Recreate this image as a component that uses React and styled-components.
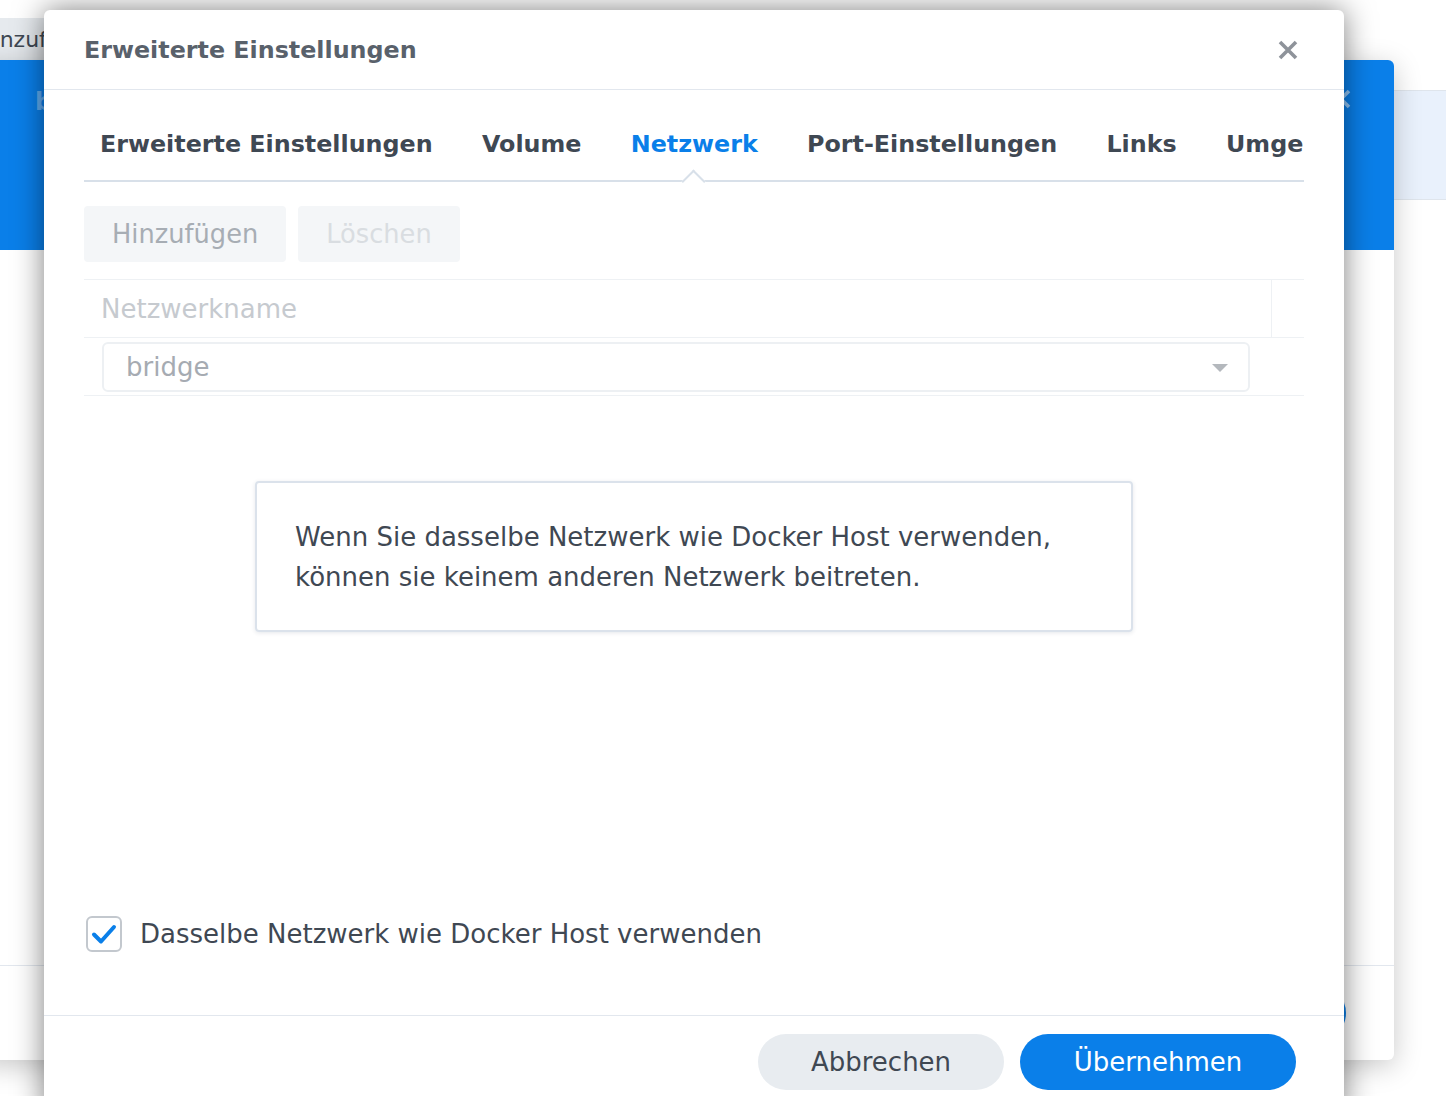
import React, { useState } from 'react';
import styled, { createGlobalStyle } from 'styled-components';

const color = {
  blue: '#0a7fe9',
  text: '#3f4853',
  title: '#59616b',
  line: '#e2e7ee',
  tabLine: '#d8e0e9',
  faint: '#c6cacf',
};

const GlobalStyle = createGlobalStyle`
  html, body {
    margin: 0;
    padding: 0;
    background: #fff;
    overflow: hidden;
  }
  body {
    font-family: "DejaVu Sans", Verdana, sans-serif;
    color: ${color.text};
  }
`;

const TABS = ['Erweiterte Einstellungen', 'Volume', 'Netzwerk', 'Port-Einstellungen', 'Links', 'Umgebung'];

function CloseIcon({ size = 22, stroke = '#8e939a' }) {
  return (
    <svg width={size} height={size} viewBox="0 0 22 22">
      <path d="M3 3 L19 19 M19 3 L3 19" stroke={stroke} strokeWidth="3.6" strokeLinecap="butt" />
    </svg>
  );
}

function App() {
  const [active, setActive] = useState('Netzwerk');
  const [sameHost, setSameHost] = useState(true);

  return (
    <>
      <GlobalStyle />
      <Styled.Desktop>
        {/* page behind everything */}
        <Styled.BackPage>
          <Styled.BackToolbar>
            <Styled.BackButton>Hinzufügen</Styled.BackButton>
          </Styled.BackToolbar>
          <Styled.BackRow />
        </Styled.BackPage>

        {/* parent window */}
        <Styled.ParentWindow>
          <Styled.ParentHeader>
            <span>bridge</span>
            <CloseIcon stroke="rgba(255,255,255,0.55)" />
          </Styled.ParentHeader>
          <Styled.ParentBody />
          <Styled.ParentFooter>
            <Styled.PillButton primary>Weiter</Styled.PillButton>
          </Styled.ParentFooter>
        </Styled.ParentWindow>

        {/* dialog */}
        <Styled.Dialog>
          <Styled.Header>
            <Styled.Title>Erweiterte Einstellungen</Styled.Title>
            <CloseIcon />
          </Styled.Header>

          <Styled.Body>
            <Styled.TabBar>
              {TABS.map((t) => (
                <Styled.Tab key={t} active={t === active} onClick={() => setActive(t)}>
                  {t}
                </Styled.Tab>
              ))}
            </Styled.TabBar>

            <Styled.Toolbar>
              <Styled.ToolButton>Hinzufügen</Styled.ToolButton>
              <Styled.ToolButton disabled>Löschen</Styled.ToolButton>
            </Styled.Toolbar>

            <Styled.Table>
              <Styled.TableRow head>
                <Styled.Cell>Netzwerkname</Styled.Cell>
                <Styled.EdgeCell divider />
              </Styled.TableRow>
              <Styled.TableRow>
                <Styled.Cell>
                  <Styled.Select>
                    <span>bridge</span>
                    <Styled.Caret />
                  </Styled.Select>
                </Styled.Cell>
                <Styled.EdgeCell />
              </Styled.TableRow>
            </Styled.Table>

            <Styled.Notice>
              Wenn Sie dasselbe Netzwerk wie Docker Host verwenden,
              <br />
              können sie keinem anderen Netzwerk beitreten.
            </Styled.Notice>

            <Styled.CheckRow onClick={() => setSameHost(!sameHost)}>
              <Styled.CheckBox>
                {sameHost && (
                  <svg width="28" height="28" viewBox="0 0 28 28">
                    <path d="M4 14.5 L11 21.5 L24 7" fill="none" stroke={color.blue} strokeWidth="4" strokeLinecap="round" strokeLinejoin="round" />
                  </svg>
                )}
              </Styled.CheckBox>
              <span>Dasselbe Netzwerk wie Docker Host verwenden</span>
            </Styled.CheckRow>
          </Styled.Body>

          <Styled.Footer>
            <Styled.PillButton>Abbrechen</Styled.PillButton>
            <Styled.PillButton primary wide>Übernehmen</Styled.PillButton>
          </Styled.Footer>
        </Styled.Dialog>
      </Styled.Desktop>
    </>
  );
}

const Styled = {
  Desktop: styled.div`
    position: relative;
    width: 1446px;
    height: 1096px;
    overflow: hidden;
    background: #fff;
  `,
  BackPage: styled.div`
    position: absolute;
    inset: 0;
    padding-top: 18px;
  `,
  BackToolbar: styled.div`
    display: flex;
    height: 42px;
  `,
  BackButton: styled.div`
    margin-left: -37px;
    padding: 0 14px;
    display: flex;
    align-items: center;
    background: #e6eaee;
    border-radius: 4px;
    font-size: 22px;
    color: ${color.text};
  `,
  BackRow: styled.div`
    margin-top: 30px;
    height: 108px;
    background: #e9f1fc;
    border-top: 1px solid #dfe5ec;
    border-bottom: 1px solid #dfe5ec;
  `,
  ParentWindow: styled.div`
    position: absolute;
    left: -20px;
    top: 60px;
    width: 1414px;
    height: 1000px;
    display: flex;
    flex-direction: column;
    background: #fff;
    border-radius: 6px;
    overflow: hidden;
    box-shadow: 0 6px 28px rgba(0, 0, 0, 0.22);
  `,
  ParentHeader: styled.div`
    height: 190px;
    flex: none;
    display: flex;
    justify-content: space-between;
    padding: 28px 42px 0 55px;
    box-sizing: border-box;
    background: ${color.blue};
    font-size: 24px;
    font-weight: bold;
    color: rgba(255, 255, 255, 0.35);
  `,
  ParentBody: styled.div`
    flex: 1;
  `,
  ParentFooter: styled.div`
    height: 95px;
    flex: none;
    box-sizing: border-box;
    display: flex;
    justify-content: flex-end;
    padding: 19px 48px 0;
    border-top: 1px solid ${color.line};
  `,
  Dialog: styled.div`
    position: absolute;
    left: 44px;
    top: 10px;
    width: 1300px;
    height: 1110px;
    display: flex;
    flex-direction: column;
    background: #fff;
    border-radius: 6px;
    box-shadow: 0 0 30px rgba(0, 0, 0, 0.5);
  `,
  Header: styled.div`
    height: 79px;
    flex: none;
    display: flex;
    align-items: center;
    justify-content: space-between;
    padding: 0 45px 0 40px;
    border-bottom: 1px solid ${color.line};
  `,
  Title: styled.div`
    font-size: 23.8px;
    font-weight: bold;
    color: ${color.title};
  `,
  Body: styled.div`
    height: 925px;
    flex: none;
    box-sizing: border-box;
    display: flex;
    flex-direction: column;
    padding: 0 40px 63px;
  `,
  TabBar: styled.div`
    display: flex;
    gap: 49.3px;
    height: 92px;
    flex: none;
    box-sizing: border-box;
    padding: 37px 0 0 16px;
    border-bottom: 2px solid ${color.tabLine};
    overflow-x: clip;
    overflow-y: visible;
  `,
  Tab: styled.div`
    position: relative;
    flex: none;
    height: 53px;
    line-height: 34px;
    font-size: 23.8px;
    font-weight: bold;
    white-space: nowrap;
    cursor: pointer;
    color: ${(p) => (p.active ? color.blue : color.text)};
    &::after {
      content: '';
      display: ${(p) => (p.active ? 'block' : 'none')};
      position: absolute;
      left: 50%;
      bottom: -10px;
      width: 17px;
      height: 17px;
      margin-left: -9px;
      background: #fff;
      border-top: 2px solid ${color.tabLine};
      border-left: 2px solid ${color.tabLine};
      box-sizing: border-box;
      transform: rotate(45deg);
    }
  `,
  Toolbar: styled.div`
    display: flex;
    gap: 12px;
    margin-top: 24px;
  `,
  ToolButton: styled.div`
    height: 56px;
    padding: 0 28px;
    display: flex;
    align-items: center;
    background: #f4f6f8;
    border-radius: 4px;
    font-size: 25.7px;
    color: ${(p) => (p.disabled ? '#d9dde1' : '#a7adb4')};
  `,
  Table: styled.div`
    margin-top: 17px;
    border-top: 1px solid #eef1f4;
  `,
  TableRow: styled.div`
    display: flex;
    height: 57px;
    border-bottom: 1px solid #eef1f4;
    font-size: 26px;
    color: ${(p) => (p.head ? color.faint : '#a6abb2')};
  `,
  Cell: styled.div`
    flex: 1;
    display: flex;
    align-items: center;
    padding: 0 22px 0 17px;
  `,
  EdgeCell: styled.div`
    width: 32px;
    flex: none;
    border-left: ${(p) => (p.divider ? '1px solid #eef1f4' : 'none')};
  `,
  Select: styled.div`
    flex: 1;
    height: 50px;
    margin-left: 1px;
    box-sizing: border-box;
    display: flex;
    align-items: center;
    justify-content: space-between;
    padding: 0 20px 0 22px;
    border: 2px solid #edf0f3;
    border-radius: 6px;
  `,
  Caret: styled.div`
    width: 0;
    height: 0;
    border-left: 8px solid transparent;
    border-right: 8px solid transparent;
    border-top: 8px solid #b4b8bd;
    margin-top: 2px;
  `,
  Notice: styled.div`
    align-self: center;
    width: 878px;
    margin-top: 85px;
    box-sizing: border-box;
    padding: 34px 38px 33px;
    border: 2px solid #dbe2eb;
    border-radius: 4px;
    box-shadow: 0 1px 4px rgba(40, 60, 90, 0.12);
    font-size: 26px;
    line-height: 40px;
    color: ${color.text};
  `,
  CheckRow: styled.div`
    margin-top: auto;
    display: flex;
    align-items: center;
    gap: 18px;
    padding-left: 2px;
    font-size: 26px;
    color: ${color.text};
    cursor: pointer;
  `,
  CheckBox: styled.div`
    width: 36px;
    height: 36px;
    box-sizing: border-box;
    display: flex;
    align-items: center;
    justify-content: center;
    border: 2px solid #c3c8ce;
    border-radius: 6px;
  `,
  Footer: styled.div`
    flex: none;
    display: flex;
    justify-content: flex-end;
    gap: 16px;
    padding: 18px 48px 0;
    border-top: 1px solid ${color.line};
  `,
  PillButton: styled.div`
    height: 56px;
    width: ${(p) => (p.wide ? '276px' : '246px')};
    display: flex;
    align-items: center;
    justify-content: center;
    border-radius: 28px;
    font-size: 26px;
    background: ${(p) => (p.primary ? color.blue : '#e8ecf0')};
    color: ${(p) => (p.primary ? '#fff' : color.text)};
  `,
};

export default App;
